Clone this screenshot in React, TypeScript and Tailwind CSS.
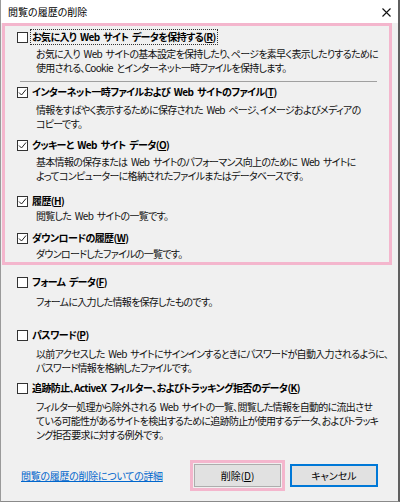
import React from "react";

const font = {
  fontFamily: '"Noto Sans CJK JP", "Noto Sans", sans-serif',
  fontFeatureSettings: '"palt"',
};

function Box({ checked }: { checked?: boolean }) {
  return (
    <span className="w-[11px] h-[11px] border border-[#333333] bg-white flex items-center justify-center shrink-0">
      {checked && (
        <svg width="9" height="9" viewBox="0 0 9 9">
          <path d="M1 4.5 L3.5 7 L8 1.5" fill="none" stroke="#222" strokeWidth="1" />
        </svg>
      )}
    </span>
  );
}

function Label({
  text,
  acc,
  checked,
  focus,
  mt,
}: {
  text: string;
  acc: string;
  checked?: boolean;
  focus?: boolean;
  mt: string;
}) {
  return (
    <div className={`flex items-center h-[14px] pl-[12px] ${mt}`}>
      <Box checked={checked} />
      <span
        className={`ml-[3px] px-[1px] font-bold text-[10px] leading-[14px] tracking-[-0.6px] [word-spacing:2px] whitespace-nowrap text-black ${
          focus ? "outline outline-1 outline-dotted outline-[#333]" : ""
        }`}
      >
        {text}(<span className="underline">{acc}</span>)
      </span>
    </div>
  );
}

function Desc({ lines, mt }: { lines: string[]; mt: string }) {
  return (
    <div className={`pl-[31px] text-[10px] leading-[14px] tracking-[-0.7px] [word-spacing:2px] text-[#111] ${mt}`}>
      {lines.map((l, i) => (
        <div key={i} className="whitespace-nowrap">
          {l}
        </div>
      ))}
    </div>
  );
}

export default function App() {
  return (
    <div
      className="w-[400px] h-[502px] flex flex-col bg-[#f0f0f0] border-l border-l-[#9a9a9a] border-r-2 border-r-[#5f5f5f] border-b border-b-[#8a8a8a] overflow-hidden"
      style={font}
    >
      <div className="h-[23px] bg-white flex items-center justify-between pl-[7px] pr-[7px] shrink-0">
        <span className="text-[10px] text-black">閲覧の履歴の削除</span>
        <svg width="9" height="9" viewBox="0 0 9 9" className="mt-[1px]">
          <path d="M0.5 0.5 L8.5 8.5 M8.5 0.5 L0.5 8.5" stroke="#111" strokeWidth="1.1" />
        </svg>
      </div>

      <div className="ml-[1px] w-[390px] border-[3px] border-[#f4b6cd] pt-[4px] pb-[1px]">
        <Label text="お気に入り Web サイト データを保持する" acc="R" focus mt="" />
        <Desc
          mt="mt-[3px]"
          lines={[
            "お気に入り Web サイトの基本設定を保持したり、ページを素早く表示したりするために",
            "使用される、Cookie とインターネット一時ファイルを保持します。",
          ]}
        />
        <div className="ml-[15px] w-[357px] h-px bg-[#a0a0a0] mt-[6px]" />
        <Label text="インターネット一時ファイルおよび Web サイトのファイル" acc="T" checked mt="mt-[3px]" />
        <Desc
          mt="mt-[4px]"
          lines={[
            "情報をすばやく表示するために保存された Web ページ、イメージおよびメディアの",
            "コピーです。",
          ]}
        />
        <Label text="クッキーと Web サイト データ" acc="O" checked mt="mt-[7px]" />
        <Desc
          mt="mt-[3px]"
          lines={[
            "基本情報の保存または Web サイトのパフォーマンス向上のために Web サイトに",
            "よってコンピューターに格納されたファイルまたはデータベースです。",
          ]}
        />
        <Label text="履歴" acc="H" checked mt="mt-[11px]" />
        <Desc mt="mt-[1px]" lines={["閲覧した Web サイトの一覧です。"]} />
        <Label text="ダウンロードの履歴" acc="W" checked mt="mt-[8px]" />
        <Desc mt="mt-[2px]" lines={["ダウンロードしたファイルの一覧です。"]} />
      </div>

      <div className="ml-[4px]">
        <Label text="フォーム データ" acc="F" mt="mt-[10px]" />
        <Desc mt="mt-[6px]" lines={["フォームに入力した情報を保存したものです。"]} />
        <Label text="パスワード" acc="P" mt="mt-[19px]" />
        <Desc
          mt="mt-[5px]"
          lines={[
            "以前アクセスした Web サイトにサインインするときにパスワードが自動入力されるように、",
            "パスワード情報を格納したファイルです。",
          ]}
        />
        <Label text="追跡防止、ActiveX フィルター、およびトラッキング拒否のデータ" acc="K" mt="mt-[6px]" />
        <Desc
          mt="mt-[5px]"
          lines={[
            "フィルター処理から除外される Web サイトの一覧、閲覧した情報を自動的に流出させ",
            "ている可能性があるサイトを検出するために追跡防止が使用するデータ、およびトラッキ",
            "ング拒否要求に対する例外です。",
          ]}
        />
      </div>

      <div className="flex items-center mt-[18px] pl-[20px]">
        <span className="text-[10px] tracking-[-0.3px] text-[#0066cc] underline whitespace-nowrap">
          閲覧の履歴の削除についての詳細
        </span>
        <div className="ml-auto flex items-center">
          <div className="border-[3px] border-[#f4b6cd] p-[1px]">
            <div className="w-[87px] h-[23px] bg-[#e1e1e1] border border-[#adadad] flex items-center justify-center text-[10px] text-black">
              削除(<span className="underline">D</span>)
            </div>
          </div>
          <div className="ml-[5px] mr-[20px] w-[88px] h-[23px] bg-[#e1e1e1] border-2 border-[#0078d7] flex items-center justify-center text-[10px] text-black">
            キャンセル
          </div>
        </div>
      </div>
    </div>
  );
}
